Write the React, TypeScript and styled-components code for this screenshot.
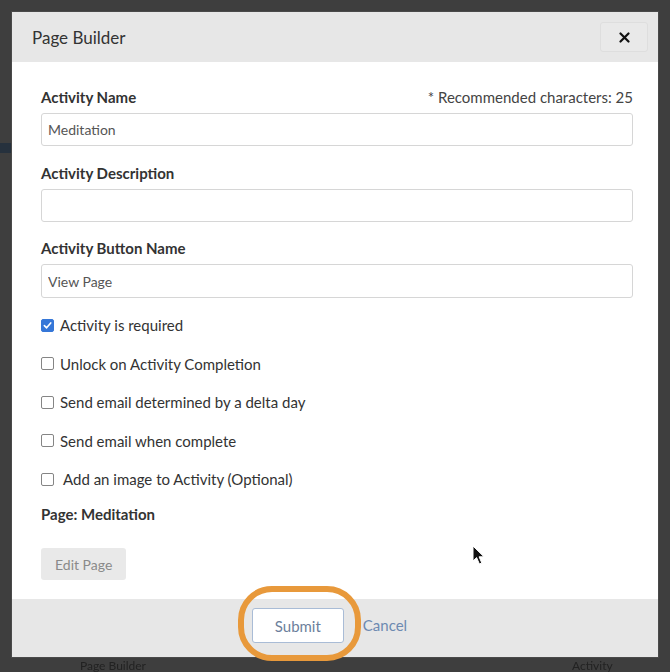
import React from 'react'
import styled, { createGlobalStyle } from 'styled-components'

const GlobalStyle = createGlobalStyle`
    html, body {
        margin: 0;
        padding: 0;
        background: #3e3e3e;
    }
    * {
        box-sizing: border-box;
    }
`;

const Backdrop = styled.div`
    position: relative;
    width: 670px;
    height: 672px;
    overflow: hidden;
    background: #3e3e3e;
    padding: 12px 12px 0 12px;
    font-family: Lato, "Open Sans", sans-serif;
`;

const SideStripe = styled.div`
    position: absolute;
    left: 0;
    top: 143px;
    width: 12px;
    height: 10px;
    background: #26313d;
`;

const Modal = styled.div`
    position: relative;
    width: 646px;
    background: #ffffff;
    box-shadow: 0 0 0 1px #4a4a4a;
`;

const Header = styled.div`
    height: 50px;
    background: #e7e7e7;
    display: flex;
    align-items: center;
    justify-content: space-between;
    padding: 0 10px 0 20px;
`;

const Title = styled.h2`
    margin: 0;
    font-size: 17px;
    font-weight: 400;
    color: #333;
`;

const CloseButton = styled.button`
    width: 48px;
    height: 30px;
    border: 1px solid #dedede;
    border-radius: 3px;
    background: #e9e9e9;
    display: flex;
    align-items: center;
    justify-content: center;
    padding: 0;
`;

const Body = styled.div`
    padding: 25px 25px 19px 29px;
    display: flex;
    flex-direction: column;
`;

const LabelRow = styled.div`
    display: flex;
    justify-content: space-between;
    align-items: center;
    height: 20px;
`;

const Label = styled.label<{ $top?: number }>`
    display: block;
    font-size: 15px;
    font-weight: 700;
    color: #333;
    line-height: 20px;
    margin-top: ${p => p.$top ?? 0}px;
`;

const Hint = styled.span`
    font-size: 15px;
    color: #444;
`;

const TextInput = styled.input<{ $h?: number }>`
    display: block;
    width: 100%;
    height: ${p => p.$h ?? 33}px;
    margin-top: 6px;
    border: 1px solid #d6d6d6;
    border-radius: 3px;
    padding: 0 6px;
    font-family: Lato, "Open Sans", sans-serif;
    font-size: 14px;
    color: #555;
    background: #fff;
    outline: none;
`;

const CheckList = styled.div`
    margin-top: 17px;
    display: flex;
    flex-direction: column;
    gap: 18.5px;
`;

const CheckRow = styled.label<{ $indent?: number }>`
    display: flex;
    align-items: center;
    height: 20px;
    gap: ${p => 6 + (p.$indent ?? 0)}px;
    font-size: 15px;
    color: #333;
`;

const Box = styled.span<{ $checked?: boolean }>`
    width: 13px;
    height: 13px;
    border-radius: 2px;
    border: 1px solid ${p => (p.$checked ? '#3677d8' : '#858585')};
    background: ${p => (p.$checked ? '#3677d8' : '#fff')};
    display: flex;
    align-items: center;
    justify-content: center;
    flex-shrink: 0;
`;

const EditButton = styled.button`
    align-self: flex-start;
    margin-top: 24px;
    height: 32px;
    padding: 0 14px;
    border: none;
    border-radius: 3px;
    background: #e9e9e9;
    color: #8a8a8a;
    font-family: Lato, "Open Sans", sans-serif;
    font-size: 14px;
`;

const Footer = styled.div`
    background: #e7e7e7;
    height: 58px;
    display: flex;
    align-items: flex-start;
    justify-content: center;
    gap: 19px;
    padding: 9px 11px 0 0;
`;

const SubmitButton = styled.button`
    width: 92px;
    height: 35px;
    border: 1px solid #a9bcd6;
    border-radius: 3px;
    background: #fff;
    color: #6c7f9c;
    font-family: Lato, "Open Sans", sans-serif;
    font-size: 15px;
`;

const CancelLink = styled.a`
    line-height: 35px;
    font-size: 15px;
    color: #6d8ab1;
    text-decoration: none;
`;

/* hand-drawn highlight ring around the submit button */
const Highlight = styled.div`
    position: absolute;
    left: 238px;
    top: 586px;
    width: 123px;
    height: 75px;
    border: 6px solid #e8993b;
    border-radius: 34px;
    pointer-events: none;
`;

const Cursor = styled.svg`
    position: absolute;
    left: 472px;
    top: 545px;
`;

const BehindText = styled.span<{ $left: number }>`
    position: absolute;
    left: ${p => p.$left}px;
    top: 659px;
    font-size: 12px;
    line-height: 13px;
    color: #222;
    filter: blur(0.6px);
`;

const Check = ({ checked, indent, children }: { checked?: boolean; indent?: number; children: React.ReactNode }) => (
    <CheckRow $indent={indent}>
        <Box $checked={checked}>
            {checked && (
                <svg width="9" height="9" viewBox="0 0 10 10">
                    <path d="M1.5 5.2 L4 7.6 L8.6 2.2" fill="none" stroke="#fff" strokeWidth="1.8" strokeLinecap="round" strokeLinejoin="round" />
                </svg>
            )}
        </Box>
        {children}
    </CheckRow>
);

const App = () => {
    return (
        <Backdrop>
            <GlobalStyle />
            <SideStripe />
            <BehindText $left={80}>Page Builder</BehindText>
            <BehindText $left={572}>Activity</BehindText>
            <Modal>
                <Header>
                    <Title>Page Builder</Title>
                    <CloseButton>
                        <svg width="11" height="11" viewBox="0 0 11 11">
                            <path d="M1.5 1.5 L9.5 9.5 M9.5 1.5 L1.5 9.5" stroke="#111" strokeWidth="2.2" strokeLinecap="round" />
                        </svg>
                    </CloseButton>
                </Header>

                <Body>
                    <LabelRow>
                        <Label>Activity Name</Label>
                        <Hint>* Recommended characters: 25</Hint>
                    </LabelRow>
                    <TextInput defaultValue="Meditation" />

                    <Label $top={17}>Activity Description</Label>
                    <TextInput defaultValue="" />

                    <Label $top={16}>Activity Button Name</Label>
                    <TextInput defaultValue="View Page" $h={34} />

                    <CheckList>
                        <Check checked>Activity is required</Check>
                        <Check>Unlock on Activity Completion</Check>
                        <Check>Send email determined by a delta day</Check>
                        <Check>Send email when complete</Check>
                        <Check indent={3}>Add an image to Activity (Optional)</Check>
                    </CheckList>

                    <Label $top={15}>Page: Meditation</Label>
                    <EditButton>Edit Page</EditButton>
                </Body>

                <Footer>
                    <SubmitButton>Submit</SubmitButton>
                    <CancelLink href="#">Cancel</CancelLink>
                </Footer>
            </Modal>

            <Highlight />
            <Cursor width="14" height="22" viewBox="0 0 14 22">
                <path d="M1 1 L1 16 L4.6 12.6 L7.4 19 L9.8 18 L7.1 11.8 L12 11.8 Z" fill="#111" stroke="#fff" strokeWidth="1" />
            </Cursor>
        </Backdrop>
    )
}

export default App;
